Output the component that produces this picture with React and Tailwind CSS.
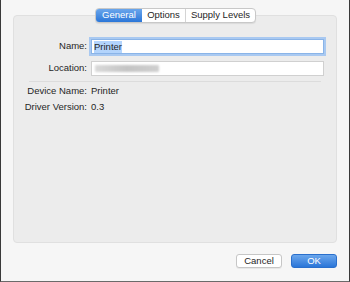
export default function App() {
  return (
    <div
      className="flex h-[282px] w-[350px] flex-col border-x border-b border-x-[#3a3a3a] border-b-[#6a6a6a] bg-[#f6f6f6] text-[9.5px] text-[#262626]"
      style={{ fontFamily: '"Liberation Sans", Arial, sans-serif' }}
    >
      {/* panel with segmented tabs */}
      <div className="relative mx-[12px] mt-[15px] h-[228px] rounded-[4px] border border-[#e0e0e0] bg-[#ececec]">
        <div className="absolute -top-[8px] left-[81px] flex h-[15px] overflow-hidden rounded-[4px] border border-[#c8c8c8] bg-white shadow-[0_1px_1px_rgba(0,0,0,0.08)]">
          <div className="flex w-[46px] items-center justify-center bg-gradient-to-b from-[#6aa6ec] to-[#2a76d8] text-white">
            General
          </div>
          <div className="flex w-[44px] items-center justify-center border-r border-[#d4d4d4]">
            Options
          </div>
          <div className="flex w-[69px] items-center justify-center">Supply Levels</div>
        </div>

        <div className="flex flex-col pt-[23px]">
          <div className="flex items-center">
            <div className="w-[77px] whitespace-nowrap pr-[4px] text-right">Name:</div>
            <div className="flex h-[15px] w-[233px] items-center border border-[#8ab4e8] bg-white px-[2px] shadow-[0_0_0_2px_#a9c9f1]">
              <span className="bg-[#b3d4fc] leading-[12px]">Printer</span>
            </div>
          </div>
          <div className="mt-[7px] flex items-center">
            <div className="w-[77px] whitespace-nowrap pr-[4px] text-right">Location:</div>
            <div className="flex h-[15px] w-[233px] items-center border border-[#d0d0d0] bg-white px-[3px]">
              <div className="h-[7px] w-[64px] rounded-[1px] bg-gradient-to-r from-[#d9d9d9] via-[#c4c4c4] to-[#cfcfcf] blur-[1px]" />
            </div>
          </div>
          <div className="mx-[15px] mt-[5px] h-px bg-[#dcdcdc]" />
          <div className="mt-[2px] flex h-[14px] items-center">
            <div className="w-[77px] whitespace-nowrap pr-[4px] text-right">Device Name:</div>
            <div>Printer</div>
          </div>
          <div className="mt-[2px] flex h-[14px] items-center">
            <div className="w-[77px] whitespace-nowrap pr-[4px] text-right">Driver Version:</div>
            <div>0.3</div>
          </div>
        </div>
      </div>

      {/* buttons */}
      <div className="mt-[11px] flex justify-end gap-[9px] pr-[12px]">
        <button className="h-[14px] w-[46px] rounded-[3px] border border-[#c6c6c6] bg-white text-[9.5px] leading-none text-[#262626] shadow-[0_1px_0_rgba(0,0,0,0.06)]">
          Cancel
        </button>
        <button className="h-[14px] w-[46px] rounded-[3px] border border-[#2a6fcc] bg-gradient-to-b from-[#6aa6ec] to-[#2a76d8] text-[9.5px] leading-none text-white">
          OK
        </button>
      </div>
    </div>
  );
}
